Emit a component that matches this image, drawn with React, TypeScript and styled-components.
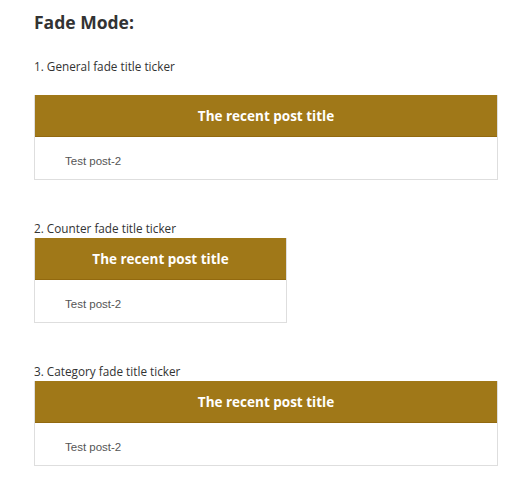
import React from 'react'
import styled, { createGlobalStyle } from 'styled-components'

const GlobalStyle = createGlobalStyle`
    body {
        margin: 0;
        background: #fff;
        font-family: "Open Sans", sans-serif;
    }
`

const tickers = [
    { label: '1. General fade title ticker', narrow: false, gap: 21 },
    { label: '2. Counter fade title ticker', narrow: true, gap: 2 },
    { label: '3. Category fade title ticker', narrow: false, gap: 2 },
]

const App = () => {
  return (
      <Page>
          <GlobalStyle />
          <Heading>Fade Mode:</Heading>
          {tickers.map((t) => (
              <Section key={t.label}>
                  <Label gap={t.gap}>{t.label}</Label>
                  <Ticker narrow={t.narrow}>
                      <Header>The recent post title</Header>
                      <Body>Test post-2</Body>
                  </Ticker>
              </Section>
          ))}
      </Page>
  )
}

export default App

const Body = styled.div`
    height: 42px;
    box-sizing: border-box;
    display: flex;
    align-items: center;
    padding: 6px 0 0 30px;
    font-family: "Liberation Sans", Arial, sans-serif;
    font-size: 11.5px;
    color: #555;
    background-color: #fff;
`
const Header = styled.div`
    height: 41px;
    display: flex;
    justify-content: center;
    align-items: center;
    background-color: #a07818;
    border-bottom: 1px solid #92690f;
    color: #fff;
    font-weight: 700;
    font-size: 13.5px;
`
const Ticker = styled.div<{ narrow: boolean }>`
    width: ${(p) => (p.narrow ? '253px' : '464px')};
    border: 1px solid #dedede;
    border-top: none;
    box-sizing: border-box;
`
const Label = styled.div<{ gap: number }>`
    font-size: 11.75px;
    color: #333;
    line-height: 16px;
    margin-bottom: ${(p) => p.gap}px;
`
const Section = styled.div`
    display: flex;
    flex-direction: column;
    margin-top: 40px;
    &:first-of-type {
        margin-top: 0;
    }
`
const Heading = styled.h2`
    margin: 0 0 24px;
    font-size: 17.5px;
    font-weight: 700;
    color: #333;
    line-height: 24px;
`
const Page = styled.div`
    padding: 10px 34px;
    display: flex;
    flex-direction: column;
`
